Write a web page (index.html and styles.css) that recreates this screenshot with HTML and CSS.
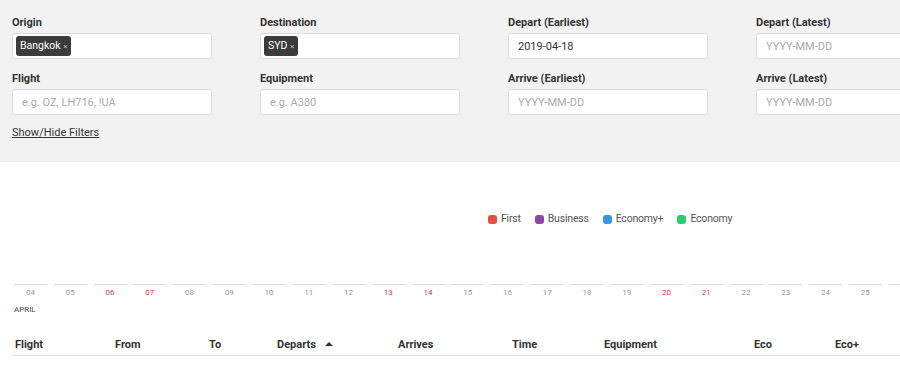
FILE: index.html
```html
<!DOCTYPE html>
<html lang="en">
<head>
    <meta charset="UTF-8">
    <meta name="viewport" content="width=device-width, initial-scale=1.0">
    <title>Award Search</title>
    <link rel="stylesheet" href="styles.css">
</head>
<body>
    <section class="filters">
        <div class="filter-grid">
            <div class="field">
                <label>Origin</label>
                <div class="box"><span class="chip">Bangkok <span class="x">×</span></span></div>
            </div>
            <div class="field">
                <label>Destination</label>
                <div class="box"><span class="chip">SYD <span class="x">×</span></span></div>
            </div>
            <div class="field">
                <label>Depart (Earliest)</label>
                <input type="text" value="2019-04-18">
            </div>
            <div class="field">
                <label>Depart (Latest)</label>
                <input type="text" placeholder="YYYY-MM-DD">
            </div>
            <div class="field">
                <label>Flight</label>
                <input type="text" placeholder="e.g. OZ, LH716, !UA">
            </div>
            <div class="field">
                <label>Equipment</label>
                <input type="text" placeholder="e.g. A380">
            </div>
            <div class="field">
                <label>Arrive (Earliest)</label>
                <input type="text" placeholder="YYYY-MM-DD">
            </div>
            <div class="field">
                <label>Arrive (Latest)</label>
                <input type="text" placeholder="YYYY-MM-DD">
            </div>
        </div>
        <a class="toggle" href="#">Show/Hide Filters</a>
    </section>

    <section class="chart">
        <ul class="legend">
            <li><span class="dot first"></span>First</li>
            <li><span class="dot business"></span>Business</li>
            <li><span class="dot premium"></span>Economy+</li>
            <li><span class="dot economy"></span>Economy</li>
        </ul>
        <div class="days" id="days"></div>
        <div class="month">APRIL</div>
    </section>

    <table class="results">
        <thead>
            <tr>
                <th class="c-flight">Flight</th>
                <th class="c-from">From</th>
                <th class="c-to">To</th>
                <th class="c-dep">Departs <span class="sort"></span></th>
                <th class="c-arr">Arrives</th>
                <th class="c-time">Time</th>
                <th class="c-equip">Equipment</th>
                <th class="c-eco">Eco</th>
                <th class="c-ecop">Eco+</th>
            </tr>
        </thead>
    </table>

    <script>
        // days 04 .. 25 of April, plus the start of the next bar
        const days = document.getElementById('days');
        const weekend = [6, 7, 13, 14, 20, 21];
        for (let d = 4; d <= 26; d++) {
            const day = document.createElement('div');
            day.className = 'day' + (weekend.includes(d) ? ' weekend' : '');
            const label = d <= 25 ? String(d).padStart(2, '0') : '';
            day.innerHTML = '<span class="bar"></span><span class="num">' + label + '</span>';
            days.appendChild(day);
        }
    </script>
</body>
</html>
```

FILE: styles.css
```css
body {
    margin: 0;
    font-family: Roboto, "Liberation Sans", sans-serif;
    color: #333;
    background: #fff;
    overflow: hidden;
}
.filters {
    background: #f2f2f2;
    padding: 16px 12px 22px;
    width: 1100px;
}
.filter-grid {
    display: grid;
    grid-template-columns: repeat(4, 200px);
    column-gap: 48px;
    row-gap: 13px;
}
.field label {
    display: block;
    font-size: 11px;
    font-weight: 700;
    line-height: 14px;
    margin-bottom: 3px;
    color: #333;
}
.field input,
.box {
    box-sizing: border-box;
    width: 200px;
    height: 26px;
    border: 1px solid #ddd;
    border-radius: 3px;
    background: #fff;
    font-family: inherit;
    font-size: 11px;
    color: #333;
    padding: 0 9px;
    outline: none;
}
.field input::placeholder {
    color: #aaa;
}
.box {
    display: flex;
    align-items: center;
    padding: 0 3px;
}
.chip {
    background: #3b3b3b;
    color: #fff;
    border-radius: 3px;
    font-size: 10.5px;
    line-height: 19px;
    padding: 0 4px;
}
.chip .x {
    font-size: 8px;
    color: #bbb;
}
.toggle {
    display: inline-block;
    margin-top: 11px;
    font-size: 11px;
    color: #333;
    line-height: 14px;
}
.chart {
    padding: 0 14px;
}
.legend {
    list-style: none;
    margin: 50px 0 0 474px;
    padding: 0;
    display: flex;
    gap: 14px;
    font-size: 10.5px;
    letter-spacing: -0.2px;
    color: #555;
    line-height: 14px;
}
.legend li {
    display: flex;
    align-items: center;
    gap: 4px;
}
.dot {
    width: 9px;
    height: 9px;
    border-radius: 3px;
}
.first { background: #e74c3c; }
.business { background: #8e44ad; }
.premium { background: #3498db; }
.economy { background: #2ecc71; }
.days {
    display: flex;
    gap: 6.75px;
    margin-top: 58px;
    width: 1000px;
}
.day {
    width: 33px;
    display: flex;
    flex-direction: column;
    align-items: center;
}
.bar {
    width: 100%;
    height: 1px;
    background: #ddd;
}
.num {
    font-size: 8px;
    color: #999;
    margin-top: 3px;
    line-height: 10px;
    height: 10px;
}
.weekend .num {
    color: #e8343f;
}
.month {
    font-size: 8px;
    color: #444;
    margin-top: 7px;
    line-height: 10px;
}
.results {
    margin: 18px 0 0 12px;
    border-collapse: collapse;
    width: 1000px;
    table-layout: fixed;
}
.results th {
    text-align: left;
    font-size: 11px;
    font-weight: 700;
    color: #333;
    padding: 5px 3px 3px;
    border-bottom: 1px solid #e5e5e5;
    line-height: 14px;
}
.c-flight { width: 94px; }
.c-from { width: 88px; }
.c-to { width: 62px; }
.c-dep { width: 115px; }
.c-arr { width: 108px; }
.c-time { width: 86px; }
.c-equip { width: 144px; }
.c-eco { width: 75px; }
.sort {
    display: inline-block;
    width: 0;
    height: 0;
    border-left: 4px solid transparent;
    border-right: 4px solid transparent;
    border-bottom: 4px solid #333;
    margin-left: 6px;
    vertical-align: 2px;
}
```
